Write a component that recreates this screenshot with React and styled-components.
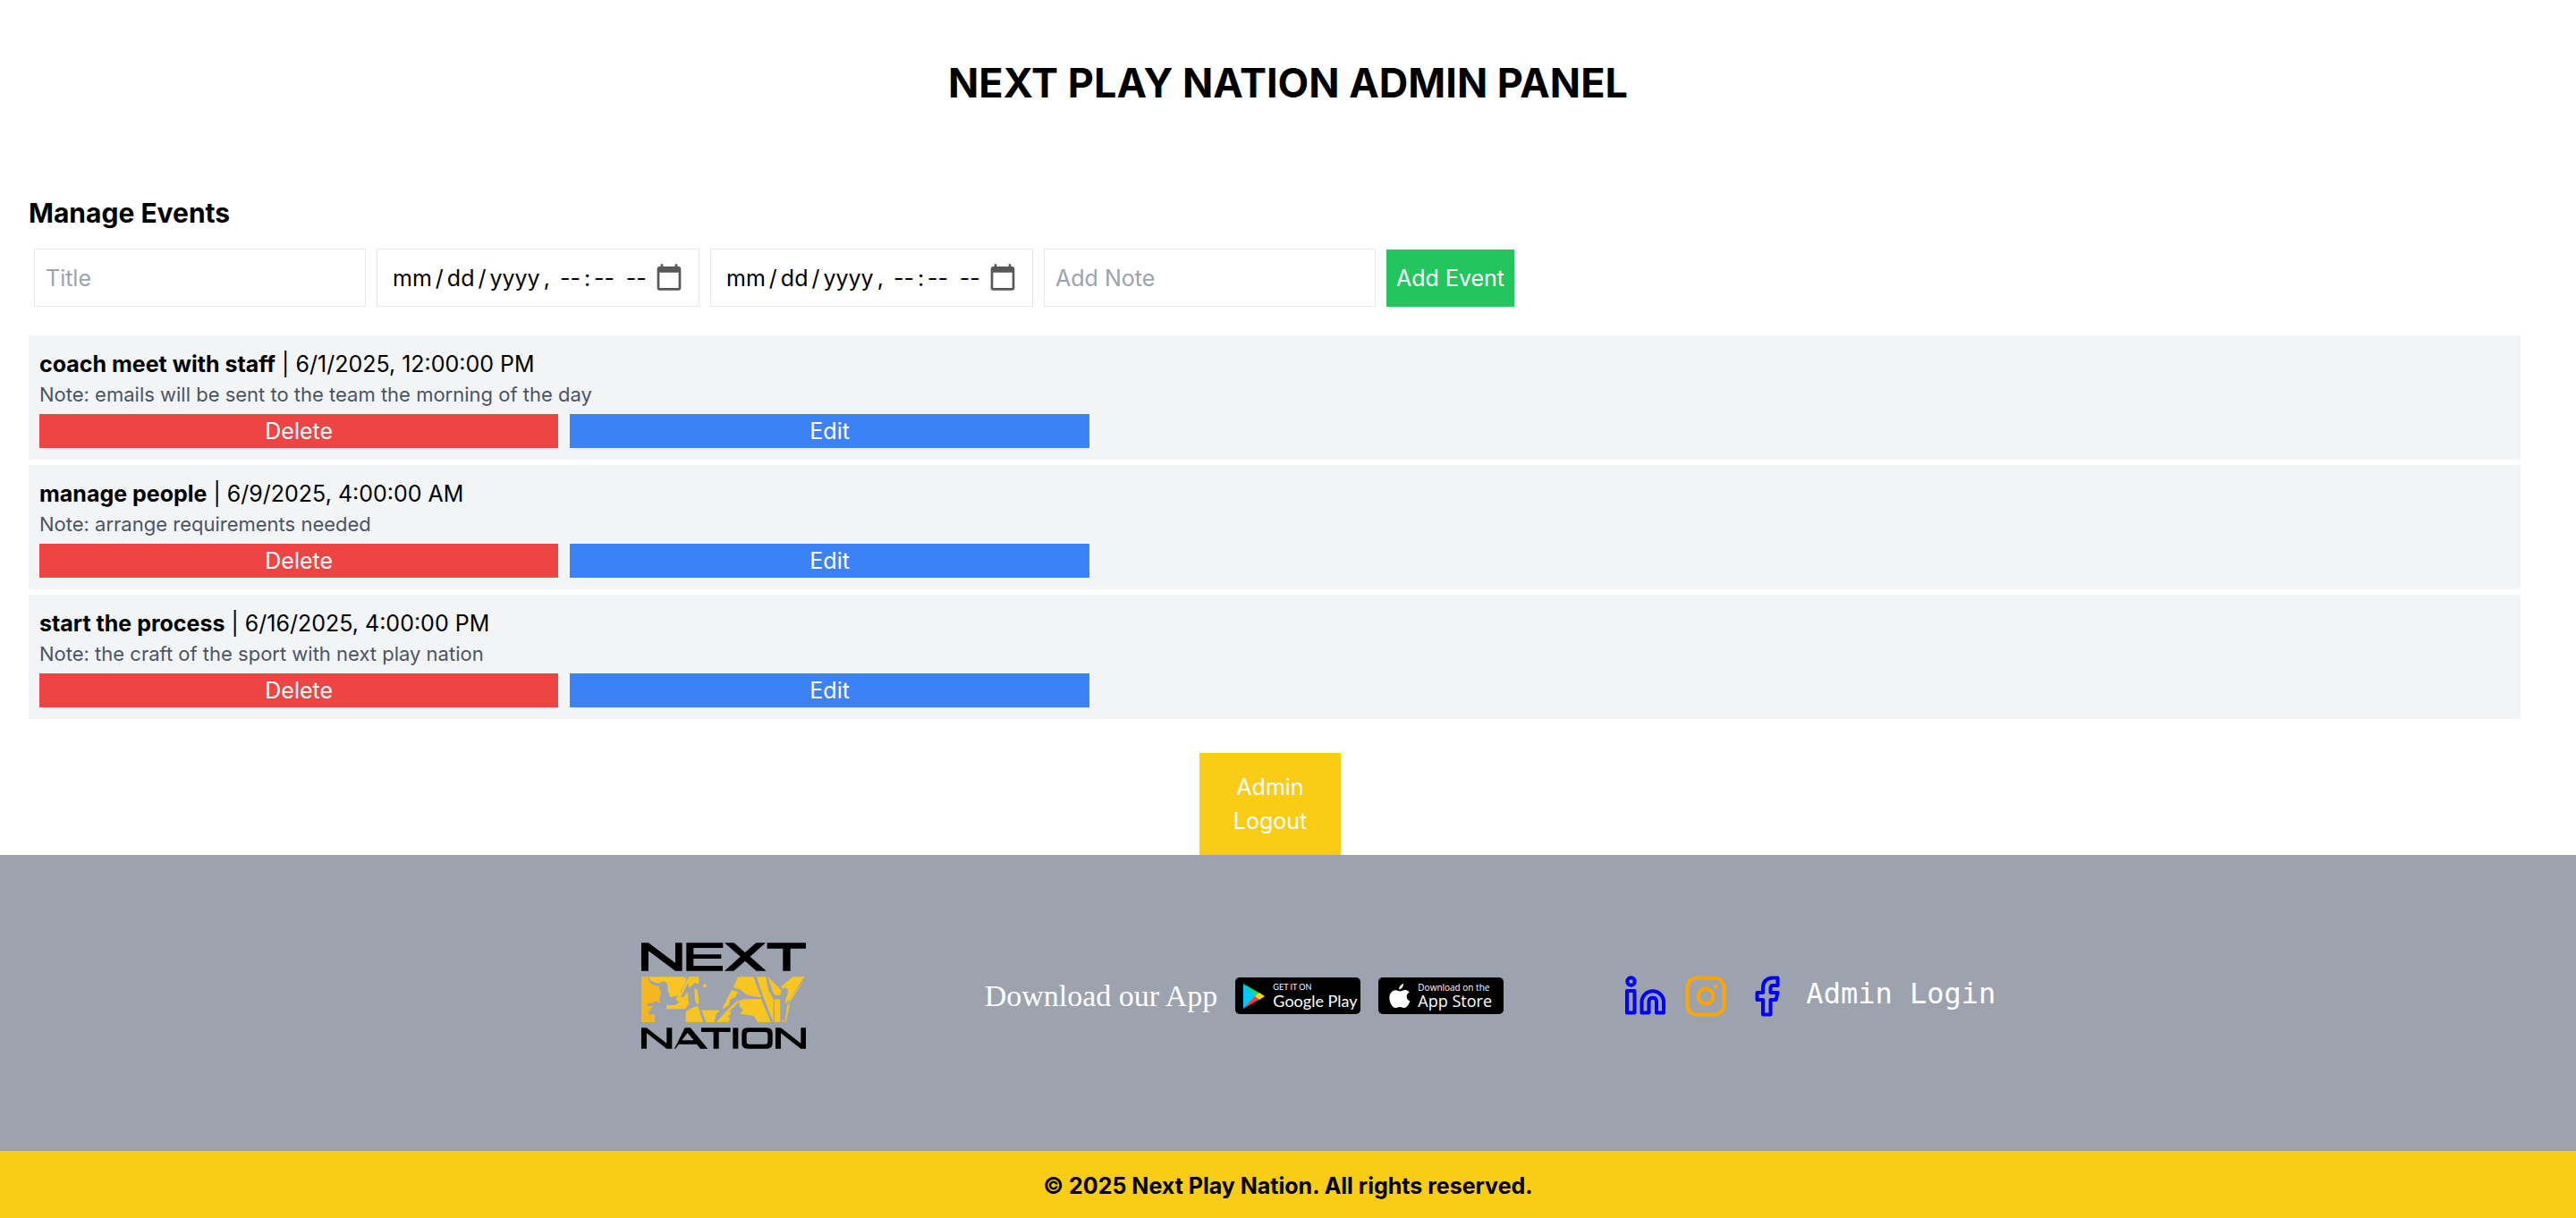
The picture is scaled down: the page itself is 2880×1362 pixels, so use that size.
import React from "react";
import styled, { createGlobalStyle } from "styled-components";

const GlobalStyle = createGlobalStyle`
  *, *::before, *::after { box-sizing: border-box; }
  body { margin: 0; background: #fff; color: #000; font-family: Inter, "Liberation Sans", sans-serif; font-size: 25px; line-height: 38px; }
  h1, h2, p, ul { margin: 0; padding: 0; }
  button, input { font: inherit; }
`;

const Title = styled.h1`
  padding: 62px 32px;
  text-align: center;
  font-size: 45px;
  line-height: 62px;
  font-weight: 700;
`;

const Main = styled.main`
  padding: 32px 62px 38px 32px;
`;

const Heading = styled.h2`
  font-size: 30px;
  line-height: 40px;
  font-weight: 700;
`;

const Form = styled.form`
  display: flex;
  align-items: center;
  gap: 12px;
  padding: 20px 6px 32px;
`;

const Field = styled.input`
  width: ${(p) => (p.type === "text" ? 371 : 361)}px;
  height: 65px;
  padding: 12px;
  border: 1px solid #e5e7eb;
  border-radius: 0;
  background: #fff;
  color: #000;
  outline: none;
  &::placeholder { color: #9ca3af; opacity: 1; }
  &::-webkit-datetime-edit { padding: 0 0 0 4px; }
  &::-webkit-datetime-edit-text { padding: 0 3px; }
  &::-webkit-calendar-picker-indicator {
    width: 34px;
    height: 34px;
    margin: 0 4px 0 0;
    padding: 0;
    opacity: 0.65;
  }
`;

const Button = styled.button`
  border: 0;
  padding: ${(p) => p.$pad || "0 12px"};
  flex: ${(p) => (p.$fill ? "1 1 0" : "0 0 auto")};
  background: ${(p) => p.$color};
  color: #fff;
  cursor: pointer;
`;

const EventList = styled.ul`
  display: flex;
  flex-direction: column;
  gap: 6px;
  list-style: none;
`;

const EventCard = styled.li`
  padding: 13px 12px;
  background: #f3f4f6;
`;

const Note = styled.p`
  font-size: 22px;
  line-height: 31px;
  color: #4b5563;
`;

const Actions = styled.div`
  display: flex;
  gap: 13px;
  width: 42.5%;
  margin-top: 6px;
`;

const LogoutRow = styled.div`
  display: flex;
  justify-content: center;
  padding-right: 40px;
`;

const LogoutButton = styled(Button)`
  width: 158px;
`;

const Footer = styled.footer`
  display: flex;
  justify-content: center;
  align-items: center;
  background: #9ca3af;
  color: #fff;
  padding: 98px 0 114px 68px;
`;

const Apps = styled.div`
  display: flex;
  align-items: center;
  gap: 20px;
  margin: 0 134px 0 200px;
`;

const Download = styled.span`
  font-family: "Liberation Serif", serif;
  font-size: 34px;
  white-space: nowrap;
`;

const Badge = styled.a`
  display: flex;
  flex-shrink: 0;
  align-items: center;
  gap: 8px;
  width: 140px;
  height: 41px;
  padding: 0 ${(p) => p.$pad}px;
  border-radius: 5px;
  background: #000;
  color: #fff;
  text-decoration: none;
  white-space: nowrap;
  svg { flex-shrink: 0; }
`;

const BadgeText = styled.span`
  display: flex;
  flex-direction: column;
  font-family: ${(p) => p.$font};
  font-size: ${(p) => p.$size}px;
  line-height: 20px;
`;

const BadgeSmall = styled.small`
  font-size: ${(p) => p.$size}px;
  line-height: 10px;
`;

const Social = styled.nav`
  display: flex;
  align-items: center;
  gap: 20px;
`;

const SocialLink = styled.a`
  display: flex;
  color: ${(p) => p.$color};
`;

const AdminLink = styled.a`
  padding-bottom: 6px;
  font-family: "DejaVu Sans Mono", monospace;
  font-size: 32px;
  color: #fff;
  text-decoration: none;
  white-space: nowrap;
`;

const Copyright = styled.div`
  padding: 20px 32px 17px;
  background: #facc15;
  text-align: center;
  font-weight: 700;
`;

const Logo = () => (
  <svg width="184" height="119" viewBox="0 0 552 357" role="img" aria-label="Next Play Nation">
    <g fill="#000">
      <path d="M0 1H24L114 68V1H137V95H114L24 28V95H0Z" />
      <path d="M151 1H274V18H175V40H268V54H175V78H273V95H151Z" />
      <path d="M279 1H311L348 33L385 1H417L365 47L419 95H386L348 62L310 95H279L332 47Z" />
      <path d="M422 1H552V20H500V95H475V20H422Z" />
      <path d="M0 286H18L85 338V286H103V356H85L18 304V356H0Z" />
      <path fillRule="evenodd" d="M146 286H165L223 356H198L186 341H126L114 356H110L114 350ZM155 303L136 328H176Z" />
      <path d="M201 286H299V300H260V356H242V300H201Z" />
      <path d="M307 286H325V356H307Z" />
      <path fillRule="evenodd" d="M355 286H421Q440 286 440 305V337Q440 356 421 356H355Q337 356 337 337V305Q337 286 355 286ZM362 300Q353 300 353 309V332Q353 341 362 341H415Q424 341 424 332V309Q424 300 415 300Z" />
      <path d="M450 286H468L535 338V286H552V356H535L468 304V356H450Z" />
    </g>
    <g fill="#f9c621">
      <path fill="#f6b620" d="M0 115H23L24 127Q32 143 49 145L60 148L59 157L66 161L65 171L61 188L63 203L46 196L38 203L17 205L23 213L39 213L23 234L27 243L45 239L46 267H0Z" />
      <path d="M26 115H143L151 122L146 137L131 165L128 178L112 180L97 183L89 160V143Q85 131 73 130L62 136L48 135L30 127Z" />
      <path d="M151 115H154L143 142L140 138L148 128Z" />
      <path d="M159 115H193V140L180 134L161 152L157 134L144 160L133 180L141 185L154 165L160 205L148 223H85L84 210L113 210L126 202L116 190L134 164Z" />
      <circle cx="213" cy="145" r="6" />
      <path d="M178 155L187 156L192 184L193 207L186 205L180 191Z" />
      <path d="M149 232L170 219L190 213L207 267H149Z" />
      <path d="M202 227H263L250 243L245 267H218Z" />
      <path d="M324 115H376L402 184L377 181L352 175L333 158L309 151Z" />
      <path d="M303 159L324 165L316 182L299 190L293 210L276 222L271 222Z" />
      <path d="M293 222Q311 205 318 199L343 190L402 189L434 267H390L378 246L332 239L341 224L331 218L328 198L297 229L301 241L291 245L298 257L291 267H251Z" />
      <path d="M386 115H418L427 163L438 180L443 192V267L412 190Z" />
      <path d="M424 115L470 160L466 176L449 177L440 163Z" />
      <path d="M508 115H548L484 207V190L490 174L492 156L478 151L475 159L469 147Z" />
      <path d="M446 191L466 190V266H448Z" />
      <path d="M489 213L545 128L496 190V216L485 267H482Z" />
      <path d="M473 257L480 267H473Z" />
    </g>
  </svg>
);

const PlayIcon = () => (
  <svg width="26" height="34" viewBox="0 0 26 34">
    <path fill="#00c8ff" d="M1 3V31L15 17Z" />
    <path fill="#00e676" d="M1 3L20 14L15 18Z" />
    <path fill="#ff3a44" d="M1 31L20 20L15 16Z" />
    <path fill="#ffd500" d="M19 13L25 17L19 21L14 17Z" />
  </svg>
);

const AppleIcon = () => (
  <svg width="24" height="28" viewBox="0 0 24 28" fill="#fff">
    <path d="M16 0C16.3 3.5 13.6 6.3 11.3 6.4C11 3.5 13.5 .7 16 0ZM22.6 9.5C18.2 12.5 19.3 18 23.4 19.5C22 23.5 19.5 27 17 27C15 27 14.4 25.9 12.2 25.9C9.9 25.9 9.3 27 7.2 27C3.5 27 .4 20.5 .4 15.9C.4 10.2 4 7.3 7.4 7.3C9.5 7.3 11 8.6 12.4 8.6C13.8 8.6 15.5 7.1 18 7.1C19.9 7.1 21.6 8 22.6 9.5Z" />
  </svg>
);

const strokeProps = { fill: "none", stroke: "currentColor", strokeWidth: 4, strokeLinejoin: "round" };

const LinkedinIcon = () => (
  <svg width="48" height="48" viewBox="0 0 48 48" {...strokeProps}>
    <circle cx="8.5" cy="7.5" r="4.2" />
    <path d="M4 18H12.5V42.5H4ZM20.5 42.5V29.5A12.3 12.3 0 0 1 45 29.5V42.5H37V29.5A4.3 4.3 0 0 0 28.5 29.5V42.5Z" />
  </svg>
);

const InstagramIcon = () => (
  <svg width="48" height="48" viewBox="0 0 48 48" {...strokeProps}>
    <rect x="3.5" y="3.5" width="41" height="41" rx="10.5" />
    <circle cx="24" cy="24" r="8.5" />
    <circle cx="35.5" cy="13" r="2.2" fill="currentColor" stroke="none" />
  </svg>
);

const FacebookIcon = () => (
  <svg width="48" height="48" viewBox="0 0 48 48" {...strokeProps}>
    <path d="M36.5 3.5H31Q20 4 20 15V20H13.5V28H20V44.5H28.5V28H34.5L36.5 20H28.5V15Q28.5 12 31 12H36.5Z" />
  </svg>
);

const events = [
  { title: "coach meet with staff", date: "6/1/2025, 12:00:00 PM", note: "emails will be sent to the team the morning of the day" },
  { title: "manage people", date: "6/9/2025, 4:00:00 AM", note: "arrange requirements needed" },
  { title: "start the process", date: "6/16/2025, 4:00:00 PM", note: "the craft of the sport with next play nation" },
];

export default function App() {
  return (
    <>
      <GlobalStyle />
      <Title>NEXT PLAY NATION ADMIN PANEL</Title>
      <Main>
        <Heading>Manage Events</Heading>
        <Form onSubmit={(e) => e.preventDefault()}>
          <Field type="text" placeholder="Title" aria-label="Title" />
          <Field type="datetime-local" aria-label="Start" />
          <Field type="datetime-local" aria-label="End" />
          <Field type="text" placeholder="Add Note" aria-label="Add Note" />
          <Button type="submit" $color="#22c55e" $pad="13px 11px">Add Event</Button>
        </Form>
        <EventList>
          {events.map((ev) => (
            <EventCard key={ev.title}>
              <p><strong>{ev.title}</strong> | {ev.date}</p>
              <Note>Note: {ev.note}</Note>
              <Actions>
                <Button type="button" $fill $color="#ef4444">Delete</Button>
                <Button type="button" $fill $color="#3b82f6">Edit</Button>
              </Actions>
            </EventCard>
          ))}
        </EventList>
      </Main>
      <LogoutRow>
        <LogoutButton type="button" $color="#facc15" $pad="19px 36px">Admin Logout</LogoutButton>
      </LogoutRow>
      <Footer>
        <Logo />
        <Apps>
          <Download>Download our App</Download>
          <Badge href="#google-play" $pad={8}>
            <PlayIcon />
            <BadgeText $font="Lato, sans-serif" $size={18}><BadgeSmall $size={9}>GET IT ON</BadgeSmall>Google Play</BadgeText>
          </Badge>
          <Badge href="#app-store" $pad={12}>
            <AppleIcon />
            <BadgeText $font='"Open Sans", sans-serif' $size={18}><BadgeSmall $size={10}>Download on the</BadgeSmall>App Store</BadgeText>
          </Badge>
        </Apps>
        <Social>
          <SocialLink href="#linkedin" aria-label="LinkedIn" $color="blue"><LinkedinIcon /></SocialLink>
          <SocialLink href="#instagram" aria-label="Instagram" $color="orange"><InstagramIcon /></SocialLink>
          <SocialLink href="#facebook" aria-label="Facebook" $color="blue"><FacebookIcon /></SocialLink>
          <AdminLink href="#admin">Admin Login</AdminLink>
        </Social>
      </Footer>
      <Copyright>© 2025 Next Play Nation. All rights reserved.</Copyright>
    </>
  );
}
